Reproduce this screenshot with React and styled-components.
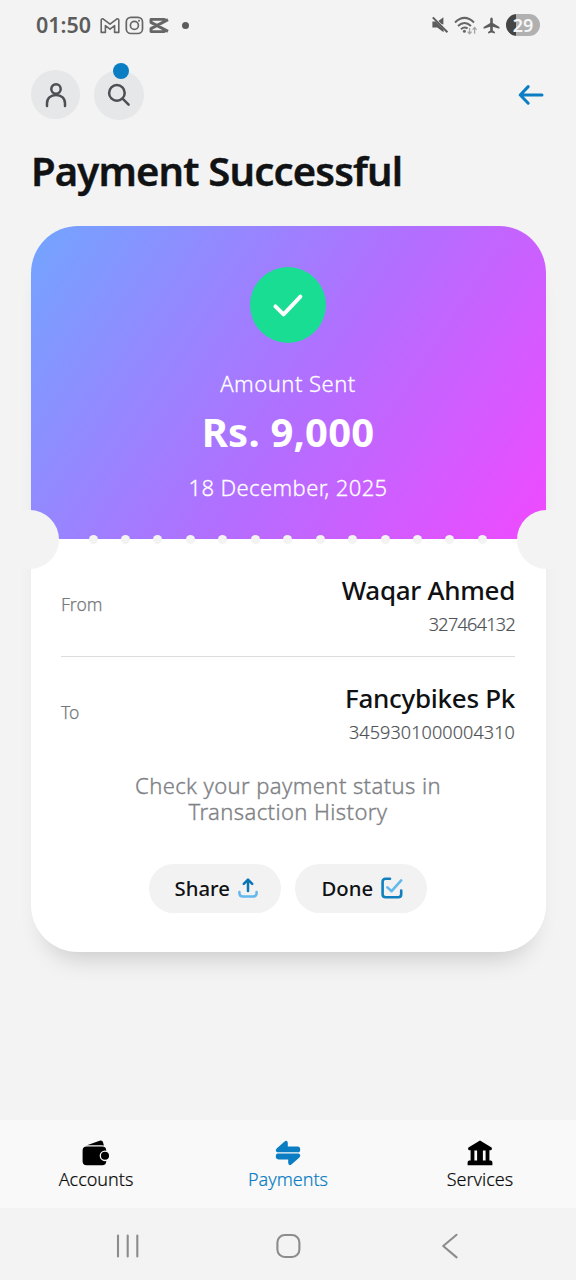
import styled, { createGlobalStyle } from 'styled-components';

const DOTS = Array.from({ length: 13 }, (_, i) => i);

export default function App() {
  return (
    <Screen>
      <GlobalStyle />
      <StatusBar>
        <Clock>01:50</Clock>
        <StatusGroup $gap="5px">
          <MailIcon />
          <CameraIcon />
          <CutIcon />
          <MoreDot />
        </StatusGroup>
        <StatusGroup $gap="5px" $end>
          <MutedIcon />
          <WifiIcon />
          <PlaneIcon />
          <Battery>29</Battery>
        </StatusGroup>
      </StatusBar>

      <Toolbar>
        <RoundButton $size={49} aria-label="Profile">
          <UserIcon />
        </RoundButton>
        <RoundButton $size={50} aria-label="Search">
          <SearchIcon />
          <Badge />
        </RoundButton>
        <BackButton aria-label="Back">
          <BackIcon />
        </BackButton>
      </Toolbar>

      <Title>Payment Successful</Title>

      <Card>
        <Summary>
          <Success>
            <CheckIcon />
          </Success>
          <Caption>Amount Sent</Caption>
          <Amount>Rs. 9,000</Amount>
          <DateText>18 December, 2025</DateText>
        </Summary>
        <Perforation>
          <Notch />
          <Dots>
            {DOTS.map((i) => <Dot key={i} />)}
          </Dots>
          <Notch />
        </Perforation>
        <Details>
          <Party>
            <Label>From</Label>
            <Person>
              <Name $spacing="-0.3px">Waqar Ahmed</Name>
              <Account $spacing="-0.7px">327464132</Account>
            </Person>
          </Party>
          <Line />
          <Party>
            <Label>To</Label>
            <Person>
              <Name $spacing="-0.3px">Fancybikes Pk</Name>
              <Account $spacing="0.1px">3459301000004310</Account>
            </Person>
          </Party>
          <Hint>
            Check your payment status in
            <br />
            Transaction History
          </Hint>
          <Actions>
            <ActionButton>
              Share
              <ShareIcon />
            </ActionButton>
            <ActionButton>
              Done
              <DoneIcon />
            </ActionButton>
          </Actions>
        </Details>
      </Card>

      <TabBar>
        <Tab>
          <WalletIcon />
          <span>Accounts</span>
        </Tab>
        <Tab $active>
          <TransferIcon />
          <span>Payments</span>
        </Tab>
        <Tab>
          <BankIcon />
          <span>Services</span>
        </Tab>
      </TabBar>

      <SystemBar>
        <RecentsIcon />
        <HomeIcon />
        <SystemBackIcon />
      </SystemBar>
    </Screen>
  );
}

/* status bar icons */
function MailIcon() {
  return (
    <svg width="20" height="17" viewBox="0 0 20 17" fill="none" stroke="#666" strokeWidth="1.6" strokeLinejoin="round">
      <path d="M1.2 3.2Q1.2 1.5 3 1.9L10 7.2L17 1.9Q18.8 1.5 18.8 3.2V15.4H14.6V8.6L10 12.2L5.4 8.6V15.4H1.2Z" />
    </svg>
  );
}

function CameraIcon() {
  return (
    <svg width="19" height="19" viewBox="0 0 19 19" fill="none" stroke="#666" strokeWidth="1.7">
      <rect x="1.3" y="1.3" width="16.2" height="16.2" rx="4.6" />
      <circle cx="9.4" cy="9.4" r="4" />
      <circle cx="14" cy="4.8" r="1" fill="#666" stroke="none" />
    </svg>
  );
}

function CutIcon() {
  return (
    <svg width="20" height="17" viewBox="0 0 20 17" fill="none" stroke="#666" strokeWidth="2.9" strokeLinejoin="round">
      <path d="M19 2.6L2 11.6V14.6H15.4V12.6M19 14.4L2 5.4V2.4H15.4V4.4" />
    </svg>
  );
}

function MutedIcon() {
  return (
    <svg width="18" height="18" viewBox="0 0 18 18" fill="#5c5c5c">
      <path d="M1.4 5.6H4.6L12.6 13.6V16.2L6.2 11.4H1.4Z" />
      <path d="M7.4 5L12.4 1.2V8.6L10.2 7.8Z" />
      <path d="M1.8 1.4L16.4 16.2" stroke="#5c5c5c" strokeWidth="2" />
    </svg>
  );
}

function WifiIcon() {
  return (
    <svg width="24" height="19" viewBox="0 0 24 19" fill="none" stroke="#666" strokeWidth="2">
      <path d="M1 6.4Q10.5 -2.6 20 6.4" />
      <path d="M4 10Q10.5 4 17 10" />
      <path d="M7 13.2Q10.5 10 13.6 12.6" />
      <circle cx="10.4" cy="15.3" r="1.5" fill="#666" stroke="none" />
      <path d="M15.6 12V17.6M13.6 15.6L15.6 17.8L17.6 15.6M20.6 17.8V11.6M18.6 13.6L20.6 11.4L22.6 13.6" stroke="#a5a5a5" strokeWidth="1.3" />
    </svg>
  );
}

function PlaneIcon() {
  return (
    <svg width="17" height="17" viewBox="0 0 17 17" fill="#5c5c5c">
      <path d="M8.5 .5Q9.8 .5 9.8 2.2V5.9L16.4 10V11.8L9.8 9.8V13.6L11.9 15.1V16.5L8.5 15.6L5.1 16.5V15.1L7.2 13.6V9.8L.6 11.8V10L7.2 5.9V2.2Q7.2 .5 8.5 .5Z" />
    </svg>
  );
}

/* toolbar icons */
function UserIcon() {
  return (
    <svg width="24" height="26" viewBox="0 0 24 26" fill="none" stroke="#4c4f53" strokeWidth="2.5" strokeLinecap="round">
      <circle cx="12" cy="7" r="4.7" />
      <path d="M3 24V21.2C3 16 7 12.9 12 12.9S21 16 21 21.2V24" />
    </svg>
  );
}

function SearchIcon() {
  return (
    <svg width="24" height="24" viewBox="0 0 24 24" fill="none" stroke="#4c4f53" strokeWidth="2.5" strokeLinecap="round">
      <circle cx="9.9" cy="9.9" r="7.8" />
      <path d="M15.6 15.6L21.6 21.6" />
    </svg>
  );
}

function BackIcon() {
  return (
    <svg width="26" height="22" viewBox="0 0 26 22" fill="none" stroke="#0b7dc2" strokeWidth="3" strokeLinecap="round" strokeLinejoin="round">
      <path d="M24 11H2.4M10.2 2.6L2.2 11L10.2 19.2" />
    </svg>
  );
}

/* card icons */
function CheckIcon() {
  return (
    <svg width="32" height="26" viewBox="0 0 32 26" fill="none" stroke="#fff" strokeWidth="3.9" strokeLinecap="round" strokeLinejoin="round">
      <path d="M3.4 14.4L11.6 22.4L28.4 4.6" />
    </svg>
  );
}

function ShareIcon() {
  return (
    <svg width="20" height="20" viewBox="0 0 20 20" fill="none" strokeWidth="2.5" strokeLinecap="round" strokeLinejoin="round">
      <path d="M1.4 14V15Q1.4 18.6 5 18.6H15Q18.6 18.6 18.6 15V14" stroke="#63b8ee" />
      <path d="M10 13V2M5.8 5.8L10 1.6L14.2 5.8" stroke="#0b74b5" />
    </svg>
  );
}

function DoneIcon() {
  return (
    <svg width="22" height="22" viewBox="0 0 22 22" fill="none" strokeWidth="2.6" strokeLinecap="round" strokeLinejoin="round">
      <path d="M9 1.8H4.6Q1.6 1.8 1.6 4.8V17.2Q1.6 20.2 4.6 20.2H17.2Q20.2 20.2 20.2 17.2V13.6" stroke="#0f7fc0" />
      <path d="M6.4 10.4L10.6 14.2L20.2 3.4" stroke="#63b8ee" />
    </svg>
  );
}

/* tab icons */
function WalletIcon() {
  return (
    <svg width="28" height="26" viewBox="0 0 28 26" fill="#000">
      <path d="M3.6 5.8L17.6 .8Q20.4 0 21 2.2L21.9 5.6Q20.6 5.2 19 5.2H5.4Z" />
      <rect x=".6" y="6.4" width="23.6" height="18.8" rx="4" />
      <circle cx="23" cy="15.8" r="4.7" stroke="#f9f9f9" strokeWidth="1.3" />
    </svg>
  );
}

function TransferIcon() {
  return (
    <svg width="26" height="26" viewBox="0 0 26 26" fill="#0b7dc2">
      <path d="M1.6 8.4L9.6 1.4Q12.4 -.2 12.8 3V6.6H22.6Q25.2 6.8 25.2 9.4Q25.2 12.3 23.2 12.3H2.4Q-.4 11.4 1.6 8.4Z" />
      <path d="M24.4 17.6L16.4 24.6Q13.6 26.2 13.2 23V19.4H3.4Q.8 19.2 .8 16.6Q.8 13.5 2.8 13.5H23.6Q26.4 14.6 24.4 17.6Z" />
    </svg>
  );
}

function BankIcon() {
  return (
    <svg width="26" height="26" viewBox="0 0 26 26" fill="#000">
      <path d="M13 .6L24.6 7.6Q25.6 10.2 23.4 10.2H22.4V20.4H24Q25.4 20.8 25.4 22.4V25.2H.6V22.4Q.6 20.8 2 20.4H3.6V10.2H2.6Q.4 10.2 1.4 7.6Z" />
      <path d="M7.4 10.4H10.1V20.6H7.4ZM15.9 10.4H18.6V20.6H15.9Z" fill="#f9f9f9" />
    </svg>
  );
}

/* system navigation icons */
function RecentsIcon() {
  return (
    <svg width="24" height="24" viewBox="0 0 24 24" stroke="#8c8c8c" strokeWidth="2.1" strokeLinecap="round">
      <path d="M2 1.6V22.4M11.7 1.6V22.4M21.3 1.6V22.4" />
    </svg>
  );
}

function HomeIcon() {
  return (
    <svg width="26" height="26" viewBox="0 0 26 26" fill="none" stroke="#8c8c8c" strokeWidth="2.1">
      <rect x="1.4" y="2" width="22" height="22" rx="7.4" />
    </svg>
  );
}

function SystemBackIcon() {
  return (
    <svg width="24" height="26" viewBox="0 0 24 26" fill="none" stroke="#8c8c8c" strokeWidth="2.1" strokeLinecap="round" strokeLinejoin="round">
      <path d="M18.6 1.8L5.2 13L18.6 24.4" />
    </svg>
  );
}

const GlobalStyle = createGlobalStyle`
  * {
    box-sizing: border-box;
  }

  body {
    margin: 0;
    background: #f3f3f3;
    font-family: 'Noto Sans', 'Open Sans', sans-serif;
  }

  svg {
    display: block;
    flex: none;
  }
`;

const Screen = styled.div`
  display: flex;
  flex-direction: column;
  width: 576px;
  height: 1280px;
  background: #f3f3f3;
  overflow: hidden;
`;

const StatusBar = styled.header`
  display: flex;
  align-items: center;
  height: 50px;
  padding: 0 36px;
`;

const Clock = styled.span`
  width: 64px;
  font-size: 21.5px;
  font-weight: 600;
  line-height: 30px;
  color: #5c5c5c;
`;

const StatusGroup = styled.div`
  display: flex;
  align-items: center;
  gap: ${(props) => props.$gap};
  margin-left: ${(props) => (props.$end ? 'auto' : '0')};
`;

const MoreDot = styled.span`
  width: 7px;
  height: 7px;
  margin-left: 8px;
  border-radius: 50%;
  background: #5c5c5c;
`;

const Battery = styled.span`
  width: 34px;
  height: 22px;
  margin-left: 1px;
  border-radius: 11px;
  background: linear-gradient(90deg, #454545 29%, #b0b0b0 29%);
  color: #f6f6f6;
  font-size: 18px;
  font-weight: 600;
  line-height: 22px;
  text-align: center;
`;

const Toolbar = styled.div`
  display: flex;
  align-items: flex-start;
  height: 50px;
  margin-top: 20px;
  padding: 0 32px 0 31px;
`;

const RoundButton = styled.button`
  position: relative;
  display: flex;
  align-items: center;
  justify-content: center;
  width: ${(props) => props.$size}px;
  height: ${(props) => props.$size}px;
  margin-right: 14px;
  padding: 0;
  border: 0;
  border-radius: 50%;
  background: #e6e7e9;
`;

/* hangs over the top edge of the search button */
const Badge = styled.span`
  position: absolute;
  top: -7px;
  left: 19px;
  width: 16px;
  height: 16px;
  border-radius: 50%;
  background: #0b7dc2;
`;

const BackButton = styled.button`
  align-self: center;
  margin-left: auto;
  padding: 0;
  border: 0;
  background: none;
`;

const Title = styled.h1`
  margin: 23px 0 0 31px;
  font-size: 40px;
  font-weight: 600;
  line-height: 56px;
  letter-spacing: -0.82px;
  color: #101214;
  white-space: nowrap;
  -webkit-text-stroke: 0.4px currentColor;
`;

const Card = styled.main`
  width: 515px;
  height: 726px;
  margin: 26.5px 0 0 30.5px;
  border-radius: 47px;
  background: #fff;
  box-shadow: 0 20px 26px -16px rgba(0, 0, 0, 0.2);
`;

const Summary = styled.section`
  display: flex;
  flex-direction: column;
  align-items: center;
  height: 313.5px;
  padding-top: 41px;
  border-radius: 47px 47px 0 0;
  background: linear-gradient(124deg, #72a5ff 0%, #b070ff 52%, #f049ff 100%);
  color: #fff;
`;

const Success = styled.div`
  display: flex;
  align-items: center;
  justify-content: center;
  width: 76px;
  height: 76px;
  border-radius: 50%;
  background: #1add94;
`;

const Caption = styled.p`
  margin: 25px 0 0;
  font-size: 22px;
  font-weight: 300;
  line-height: 30px;
  letter-spacing: 0.5px;
  -webkit-text-stroke: 0.3px currentColor;
`;

const Amount = styled.p`
  margin: 8px 0 0;
  font-size: 40px;
  font-weight: 700;
  line-height: 52px;
  letter-spacing: 0.2px;
`;

const DateText = styled(Caption)`
  margin-top: 14px;
  letter-spacing: 0.4px;
`;

/* tear line between the two halves of the ticket */
const Perforation = styled.div`
  display: flex;
  align-items: center;
  height: 59px;
  margin: -29.5px -30.5px;
`;

const Notch = styled.span`
  width: 59px;
  height: 59px;
  border-radius: 50%;
  background: #f3f3f3;
`;

const Dots = styled.div`
  display: flex;
  flex: 1;
  justify-content: space-between;
  padding: 1px 30px 0 29.5px;
`;

const Dot = styled.span`
  width: 9px;
  height: 9px;
  border-radius: 50%;
  background: #f3f3f3;
`;

const Details = styled.section`
  padding: 34px 30.5px 0;
`;

const Party = styled.div`
  display: flex;
  align-items: center;
  justify-content: space-between;
  height: 66px;
`;

const Label = styled.span`
  margin-top: -4px;
  font-size: 17.5px;
  font-weight: 300;
  color: #77797d;
  -webkit-text-stroke: 0.25px currentColor;
`;

const Person = styled.div`
  display: flex;
  flex-direction: column;
  align-items: flex-end;
  padding-top: 2px;
`;

const Name = styled.span`
  font-size: 26px;
  font-weight: 500;
  line-height: 35px;
  letter-spacing: ${(props) => props.$spacing || '0'};
  color: #0f1113;
`;

const Account = styled.span`
  font-size: 18px;
  font-weight: 300;
  line-height: 33px;
  letter-spacing: ${(props) => props.$spacing || '0'};
  color: #505356;
  -webkit-text-stroke: 0.2px currentColor;
`;

const Line = styled.hr`
  height: 1px;
  margin: 17px 0 24px;
  border: 0;
  background: #dcdcdc;
`;

const Hint = styled.p`
  margin: 24.5px 0 0;
  font-size: 22px;
  font-weight: 300;
  line-height: 26.3px;
  letter-spacing: 0.4px;
  text-align: center;
  color: #808286;
  -webkit-text-stroke: 0.35px currentColor;
`;

const Actions = styled.div`
  display: flex;
  justify-content: center;
  gap: 14.5px;
  margin-top: 39.5px;
`;

const ActionButton = styled.button`
  display: flex;
  align-items: center;
  justify-content: center;
  gap: 8px;
  width: 131.5px;
  height: 49px;
  padding: 0 0 0 2.5px;
  border: 0;
  border-radius: 24.5px;
  background: #f2f2f2;
  color: #0f1113;
  font-family: inherit;
  font-size: 20.3px;
  font-weight: 500;
`;

const TabBar = styled.nav`
  display: grid;
  grid-template-columns: repeat(3, 1fr);
  height: 88px;
  margin-top: auto;
  padding-top: 20px;
  background: #f9f9f9;
`;

const Tab = styled.a`
  display: flex;
  flex-direction: column;
  align-items: center;
  color: ${(props) => (props.$active ? '#0b7dc2' : '#0a0a0a')};
  font-size: 18px;
  font-weight: 300;
  line-height: 27px;
  -webkit-text-stroke: 0.2px currentColor;
`;

const SystemBar = styled.footer`
  display: flex;
  align-items: center;
  justify-content: space-between;
  height: 72px;
  padding: 4px 114px 0 116px;
`;
